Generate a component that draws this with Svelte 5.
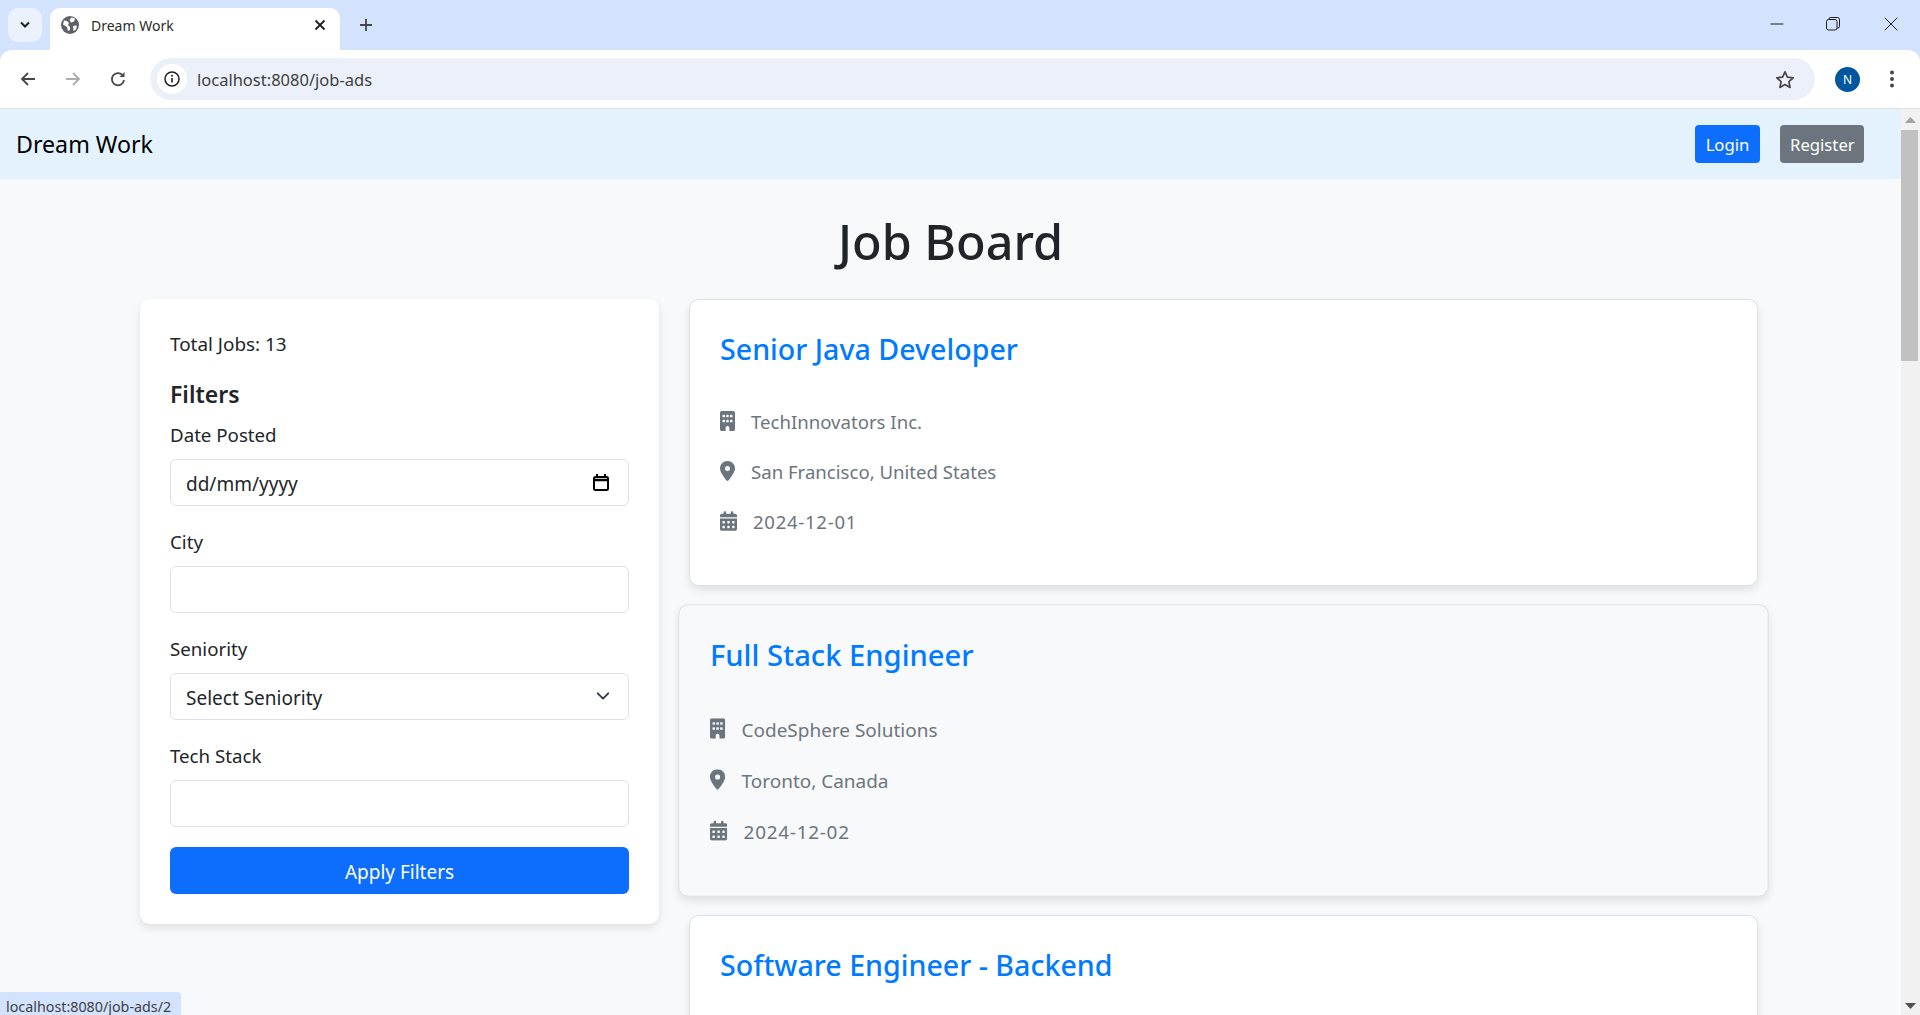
<script>
  const building = "M48 0C21.5 0 0 21.5 0 48V464c0 26.5 21.5 48 48 48h96V432c0-26.5 21.5-48 48-48s48 21.5 48 48v80h96c26.5 0 48-21.5 48-48V48c0-26.5-21.5-48-48-48H48zM64 240c0-8.8 7.2-16 16-16h32c8.8 0 16 7.2 16 16v32c0 8.8-7.2 16-16 16H80c-8.8 0-16-7.2-16-16V240zm112-16h32c8.8 0 16 7.2 16 16v32c0 8.8-7.2 16-16 16H176c-8.8 0-16-7.2-16-16V240c0-8.8 7.2-16 16-16zm80 16c0-8.8 7.2-16 16-16h32c8.8 0 16 7.2 16 16v32c0 8.8-7.2 16-16 16H272c-8.8 0-16-7.2-16-16V240zM80 96h32c8.8 0 16 7.2 16 16v32c0 8.8-7.2 16-16 16H80c-8.8 0-16-7.2-16-16V112c0-8.8 7.2-16 16-16zm80 16c0-8.8 7.2-16 16-16h32c8.8 0 16 7.2 16 16v32c0 8.8-7.2 16-16 16H176c-8.8 0-16-7.2-16-16V112zM272 96h32c8.8 0 16 7.2 16 16v32c0 8.8-7.2 16-16 16H272c-8.8 0-16-7.2-16-16V112c0-8.8 7.2-16 16-16z";
  const pin = "M215.7 499.2C267 435 384 279.4 384 192C384 86 298 0 192 0S0 86 0 192c0 87.4 117 243 168.3 307.2c12.3 15.3 35.1 15.3 47.4 0zM192 128a64 64 0 1 1 0 128 64 64 0 1 1 0-128z";
  const calendar = "M128 0c17.7 0 32 14.3 32 32V64H288V32c0-17.7 14.3-32 32-32s32 14.3 32 32V64h48c26.5 0 48 21.5 48 48v48H0V112C0 85.5 21.5 64 48 64H96V32c0-17.7 14.3-32 32-32zM0 192H448V464c0 26.5-21.5 48-48 48H48c-26.5 0-48-21.5-48-48V192zm64 80v32c0 8.8 7.2 16 16 16h32c8.8 0 16-7.2 16-16V272c0-8.8-7.2-16-16-16H80c-8.8 0-16 7.2-16 16zm128 0v32c0 8.8 7.2 16 16 16h32c8.8 0 16-7.2 16-16V272c0-8.8-7.2-16-16-16H208c-8.8 0-16 7.2-16 16zm144-16c-8.8 0-16 7.2-16 16v32c0 8.8 7.2 16 16 16h32c8.8 0 16-7.2 16-16V272c0-8.8-7.2-16-16-16H336zM64 400v32c0 8.8 7.2 16 16 16h32c8.8 0 16-7.2 16-16V400c0-8.8-7.2-16-16-16H80c-8.8 0-16 7.2-16 16zm144-16c-8.8 0-16 7.2-16 16v32c0 8.8 7.2 16 16 16h32c8.8 0 16-7.2 16-16V400c0-8.8-7.2-16-16-16H208zm112 16v32c0 8.8 7.2 16 16 16h32c8.8 0 16-7.2 16-16V400c0-8.8-7.2-16-16-16H336c-8.8 0-16 7.2-16 16z";

  // the third card runs off the bottom of the window, only its title shows
  const jobs = [
    { title: "Senior Java Developer", company: "TechInnovators Inc.", place: "San Francisco, United States", date: "2024-12-01" },
    { title: "Full Stack Engineer", company: "CodeSphere Solutions", place: "Toronto, Canada", date: "2024-12-02", hover: true },
    { title: "Software Engineer - Backend" }
  ];
</script>

<div class="window">
  <div class="tabstrip">
    <div class="tabsearch">
      <svg width="12" height="8" viewBox="0 0 12 8"><path d="M2 1.5l4 4 4-4" fill="none" stroke="#1f1f1f" stroke-width="2"/></svg>
    </div>
    <div class="tab">
      <svg class="favicon" width="18" height="18" viewBox="0 0 18 18">
        <circle cx="9" cy="9" r="9" fill="#5f6368"/>
        <path d="M3 4.500l3 .5 2 2-1 2 2 2v3l-2 1-1-4-4-2.500zM10.500 1.500l3.500 1-1 3-3 1-1.500-2.500zM12 10l4-.5-1 4-2.500 1.500z" fill="#fff"/>
      </svg>
      <span class="tabtitle">Dream Work</span>
      <svg class="tabclose" width="12" height="12" viewBox="0 0 12 12"><path d="M1.500 1.500l9 9M10.500 1.500l-9 9" stroke="#1f1f1f" stroke-width="1.800"/></svg>
    </div>
    <svg class="newtab" width="14" height="14" viewBox="0 0 14 14"><path d="M7 1v12M1 7h12" stroke="#444746" stroke-width="1.800"/></svg>
    <div class="winbtns">
      <svg width="14" height="14" viewBox="0 0 14 14"><path d="M0.500 7h13" stroke="#1f1f1f" stroke-width="1"/></svg>
      <svg width="14" height="14" viewBox="0 0 14 14" fill="none" stroke="#1f1f1f" stroke-width="1"><rect x="0.500" y="2.500" width="10.500" height="10.500" rx="2"/><path d="M3 2.500V2a1.500 1.500 0 0 1 1.500-1.500H11.500A2 2 0 0 1 13.500 2.500V9.500a1.500 1.500 0 0 1-1.500 1.500H11"/></svg>
      <svg width="14" height="14" viewBox="0 0 14 14"><path d="M0.700 0.700l12.600 12.600M13.300 0.700L0.700 13.300" stroke="#1f1f1f" stroke-width="1"/></svg>
    </div>
  </div>

  <div class="toolbar">
    <svg class="navicon" width="16" height="16" viewBox="0 0 16 16" fill="none" stroke="#474747" stroke-width="1.800"><path d="M15 8H2M8 2L2 8l6 6"/></svg>
    <svg class="navicon" width="16" height="16" viewBox="0 0 16 16" fill="none" stroke="#acacac" stroke-width="1.800"><path d="M1 8h13M8 2l6 6-6 6"/></svg>
    <svg class="navicon reload" width="16" height="16" viewBox="0 0 16 16" fill="none" stroke="#474747" stroke-width="1.800"><path d="M14 9a6.100 6.100 0 1 1-1.600-5"/><path d="M14.500 1v5h-5z" stroke="none" fill="#474747"/></svg>
    <div class="omnibox">
      <span class="siteinfo">
        <svg width="16" height="16" viewBox="0 0 16 16"><circle cx="8" cy="8" r="7" fill="none" stroke="#1f1f1f" stroke-width="1.500"/><path d="M8 7v4.500" stroke="#1f1f1f" stroke-width="1.600"/><circle cx="8" cy="4.800" r="1" fill="#1f1f1f"/></svg>
      </span>
      <span class="url">localhost:8080/job-ads</span>
      <svg class="star" width="20" height="19" viewBox="0 0 20 19"><path d="M10 1.800l2.400 5.400 5.800.6-4.300 3.900 1.200 5.700L10 14.500l-5.100 2.900 1.200-5.700L1.800 7.800l5.800-.6z" fill="none" stroke="#474747" stroke-width="1.700" stroke-linejoin="round"/></svg>
    </div>
    <span class="avatar">N</span>
    <svg class="menu" width="4" height="18" viewBox="0 0 4 18" fill="#474747"><circle cx="2" cy="2.500" r="2"/><circle cx="2" cy="9" r="2"/><circle cx="2" cy="15.500" r="2"/></svg>
  </div>

  <div class="viewport">
    <div class="page">
      <nav class="navbar">
        <span class="brand">Dream Work</span>
        <div class="navbtns">
          <button class="btn primary">Login</button>
          <button class="btn secondary">Register</button>
        </div>
      </nav>

      <h1>Job Board</h1>

      <div class="layout">
        <aside class="filters">
          <p class="total">Total Jobs: 13</p>
          <h2>Filters</h2>
          <label for="date">Date Posted</label>
          <div class="field">
            <input id="date" class="control" type="text" value="dd/mm/yyyy" />
            <svg class="fieldicon" width="16" height="17" viewBox="0 0 16 17" fill="none" stroke="#000" stroke-width="2"><rect x="1" y="3" width="14" height="13" rx="1.500"/><path d="M1 6h14" stroke-width="2.500"/><path d="M4 0v3M12 0v3"/></svg>
          </div>
          <label for="city">City</label>
          <div class="field"><input id="city" class="control" type="text" /></div>
          <label for="seniority">Seniority</label>
          <div class="field">
            <select id="seniority" class="control"><option>Select Seniority</option></select>
            <svg class="fieldicon chevron" width="14" height="14" viewBox="0 0 16 16" fill="none" stroke="#343a40" stroke-width="2.200" stroke-linecap="round" stroke-linejoin="round"><path d="M2 5l6 6 6-6"/></svg>
          </div>
          <label for="tech">Tech Stack</label>
          <div class="field"><input id="tech" class="control" type="text" /></div>
          <button class="apply">Apply Filters</button>
        </aside>

        <section class="jobs">
          {#each jobs as job}
            <article class="job" class:hover={job.hover}>
              <h3>{job.title}</h3>
              {#if job.company}
                <div class="row"><svg width="15" height="20" viewBox="0 0 384 512"><path d={building} /></svg><span>{job.company}</span></div>
                <div class="row"><svg width="15" height="20" viewBox="0 0 384 512"><path d={pin} /></svg><span>{job.place}</span></div>
                <div class="row"><svg class="cal" width="17" height="20" viewBox="0 0 448 512"><path d={calendar} /></svg><span class="date">{job.date}</span></div>
              {/if}
            </article>
          {/each}
        </section>
      </div>
    </div>

    <div class="scrollbar">
      <svg class="up" width="11" height="6" viewBox="0 0 11 6"><path d="M5.500 0L11 6H0z" fill="#a3a3a3"/></svg>
      <div class="thumb"></div>
      <div class="track"></div>
      <svg class="down" width="11" height="6" viewBox="0 0 11 6"><path d="M5.500 6L11 0H0z" fill="#505050"/></svg>
    </div>

    <div class="status">localhost:8080/job-ads/2</div>
  </div>
</div>

<style>
  :global(body) {
    margin: 0;
    overflow: hidden;
  }

  .window {
    height: 100vh;
    display: flex;
    flex-direction: column;
    background: #d3e3fd;
    font-family: "Noto Sans", "Open Sans", sans-serif;
    color: #212529;
  }

  .tabstrip {
    height: 50px;
    flex: none;
    display: flex;
    align-items: flex-end;
    position: relative;
  }

  .tabsearch {
    width: 34px;
    height: 34px;
    margin: 0 8px 8px 8px;
    border-radius: 10px;
    background: #ebf1fd;
    display: flex;
    align-items: center;
    justify-content: center;
  }

  .tab {
    width: 290px;
    height: 42px;
    background: #fff;
    border-radius: 10px 10px 0 0;
    display: flex;
    align-items: center;
    padding: 0 14px 8px 11px;
    box-sizing: border-box;
  }

  .favicon {
    flex: none;
  }

  .tabtitle {
    flex: 1;
    margin-left: 12px;
    font-size: 14px;
    color: #2c2c2c;
  }

  .newtab {
    margin: 0 0 18px 19px;
  }

  .winbtns {
    margin-left: auto;
    display: flex;
    gap: 42px;
    padding: 0 22px 19px 0;
  }

  .winbtns svg:last-child {
    margin-left: 2px;
  }

  .toolbar {
    height: 58px;
    flex: none;
    background: #fff;
    border-radius: 12px 12px 0 0;
    border-bottom: 1px solid #e1e3e1;
    box-sizing: content-box;
    display: flex;
    align-items: center;
    padding-left: 20px;
  }

  .navicon {
    margin-right: 29px;
  }

  .reload {
    margin-right: 24px;
  }

  .omnibox {
    width: 1665px;
    height: 42px;
    background: #ecf0f9;
    border-radius: 21px;
    display: flex;
    align-items: center;
    flex: none;
    padding-left: 7px;
    box-sizing: border-box;
  }

  .siteinfo {
    width: 30px;
    height: 30px;
    border-radius: 50%;
    background: #fff;
    display: flex;
    align-items: center;
    justify-content: center;
  }

  .url {
    margin-left: 10px;
    font-size: 16.5px;
    color: #3c3f43;
  }

  .star {
    margin-left: auto;
    margin-right: 20px;
  }

  .avatar {
    width: 25px;
    height: 25px;
    margin-left: 20px;
    border-radius: 50%;
    background: #00579d;
    color: #fff;
    font-size: 12px;
    display: flex;
    align-items: center;
    justify-content: center;
  }

  .menu {
    margin-left: 30px;
  }

  .viewport {
    flex: 1;
    min-height: 0;
    display: flex;
    position: relative;
    overflow: hidden;
  }

  .page {
    flex: 1;
    min-width: 0;
    background: #f8f9fa;
  }

  .navbar {
    height: 70px;
    background: #e3f2fd;
    display: flex;
    align-items: center;
    justify-content: space-between;
    padding: 0 37px 0 16px;
  }

  .brand {
    font-size: 23.2px;
    color: #000;
  }

  .navbtns {
    display: flex;
    gap: 20px;
  }

  .btn {
    height: 38px;
    border: 0;
    border-radius: 4px;
    color: #fff;
    font: inherit;
    font-size: 16.7px;
    padding: 0 10px;
  }

  .primary {
    width: 65px;
    background: #0d6efd;
  }

  .secondary {
    width: 84px;
    background: #6c757d;
  }

  h1 {
    margin: 32px 0 28px;
    font-size: 48.5px;
    line-height: 60px;
    font-weight: 500;
    text-align: center;
  }

  .layout {
    display: grid;
    grid-template-columns: 519px 1069px;
    gap: 30px;
    padding-left: 140px;
    align-items: start;
  }

  .filters {
    background: #fff;
    border-radius: 10px;
    padding: 30px;
    box-shadow: 0 4px 8px rgba(0, 0, 0, 0.1);
    height: 625px;
    box-sizing: border-box;
  }

  .total {
    margin: 0 0 20px;
    font-size: 18.9px;
    line-height: 30px;
  }

  h2 {
    margin: 0 0 10px;
    font-size: 23px;
    line-height: 30px;
    font-weight: 600;
  }

  label {
    display: block;
    margin-bottom: 8px;
    font-size: 18.7px;
    line-height: 32px;
  }

  .field {
    position: relative;
    margin-bottom: 20px;
  }

  .control {
    display: block;
    width: 100%;
    height: 47px;
    box-sizing: border-box;
    border: 1px solid #dee2e6;
    border-radius: 6px;
    background: #fff;
    padding: 2px 15px 0;
    font: inherit;
    font-size: 19px;
    color: #212529;
    appearance: none;
  }

  .fieldicon {
    position: absolute;
    right: 20px;
    top: 15px;
  }

  .chevron {
    right: 19px;
    top: 16px;
  }

  .apply {
    display: block;
    width: 100%;
    height: 47px;
    border: 0;
    border-radius: 6px;
    background: #0d6efd;
    color: #fff;
    font: inherit;
    font-size: 19px;
    padding: 2px 0 0;
  }

  .job {
    background: #fff;
    border: 1px solid #dee2e6;
    border-radius: 10px;
    height: 287px;
    box-sizing: border-box;
    margin-bottom: 21px;
    padding: 29px 30px 30px;
    box-shadow: 0 4px 8px rgba(0, 0, 0, 0.1);
  }

  .job.hover {
    background: #f8f9fa;
    transform: scale(1.02);
  }

  h3 {
    margin: 0 0 27px;
    font-size: 28.6px;
    line-height: 40px;
    font-weight: 500;
    color: #007bff;
  }

  .row {
    display: flex;
    align-items: center;
    gap: 16px;
    height: 50px;
    font-size: 18.6px;
    color: #6c757d;
  }

  .row svg {
    fill: #6c757d;
    flex: none;
  }

  .date {
    letter-spacing: 0.7px;
  }

  .scrollbar {
    width: 19px;
    flex: none;
    background: #f1f1f1;
    display: flex;
    flex-direction: column;
    align-items: center;
  }

  .scrollbar svg {
    flex: none;
  }

  .up {
    margin: 8px 0 7px;
  }

  .down {
    margin: 6px 0;
  }

  .thumb {
    width: 17px;
    height: 231px;
    background: #c1c1c1;
    flex: none;
    align-self: flex-start;
  }

  .track {
    flex: 1;
  }

  .status {
    position: absolute;
    left: 0;
    bottom: 0;
    height: 23px;
    padding: 0 10px 0 6px;
    background: #d3e3fd;
    border-top-right-radius: 4px;
    font-size: 14.3px;
    line-height: 29px;
    color: #3c3f43;
  }
</style>
